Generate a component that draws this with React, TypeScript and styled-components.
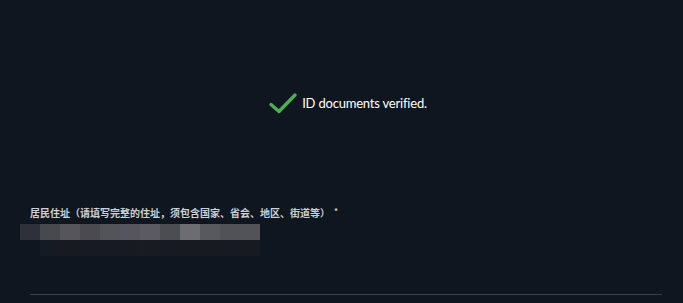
import React from "react";
import styled, { createGlobalStyle } from "styled-components";

const Global = createGlobalStyle`
  html, body {
    margin: 0;
    padding: 0;
    background: #10161f;
  }
  body {
    font-family: Lato, "Noto Sans", sans-serif;
    width: 683px;
    height: 303px;
    overflow: hidden;
  }
`;

const Page = styled.div`
  width: 683px;
  height: 303px;
  box-sizing: border-box;
  background: #10161f;
  display: flex;
  flex-direction: column;
`;

const Status = styled.div`
  margin-top: 92px;
  height: 22px;
  display: flex;
  align-items: center;
  justify-content: center;
  gap: 4px;
  padding-left: 12px;
`;

const StatusText = styled.span`
  font-family: Lato, sans-serif;
  font-size: 13px;
  color: #ffffff;
  letter-spacing: -0.2px;
`;

const Field = styled.div`
  margin-top: 92px;
  padding-left: 20px;
  display: flex;
  flex-direction: column;
`;

const Label = styled.label`
  padding-left: 10px;
  font-family: "Noto Sans CJK SC", sans-serif;
  font-size: 10px;
  font-weight: 700;
  line-height: 14px;
  color: #cdcfd2;
  display: flex;
  align-items: flex-start;
`;

const Star = styled.span`
  margin-left: 4px;
  font-size: 8px;
  line-height: 10px;
  color: #cdcfd2;
`;

const Mosaic = styled.div`
  margin-top: 4px;
  display: flex;
  flex-direction: column;
`;

const MosaicRow = styled.div<{ $indent: number }>`
  display: flex;
  padding-left: ${(p) => p.$indent}px;
`;

const Cell = styled.div<{ $c: string; $h: number }>`
  width: 20px;
  height: ${(p) => p.$h}px;
  background: ${(p) => p.$c};
`;

const Divider = styled.div`
  margin: auto 21px 8px 30px;
  height: 1px;
  background: #3b4048;
`;

const topRow = [
  "#2f3139",
  "#48484f",
  "#56555c",
  "#4b4a51",
  "#52545a",
  "#56555d",
  "#5b5961",
  "#4c4c53",
  "#6c6c72",
  "#57595f",
  "#515158",
  "#525259",
];

const bottomRow = [
  "#161a22",
  "#181a22",
  "#181a23",
  "#171a22",
  "#181a22",
  "#191b23",
  "#171a22",
  "#181a22",
  "#181a22",
  "#171a22",
  "#171a21",
];

export default function App() {
  return (
    <>
      <Global />
      <Page>
        <Status>
          <svg width="30" height="22" viewBox="0 0 30 22">
            <polyline
              points="3,12.5 11,19.5 27,3"
              fill="none"
              stroke="#4caf50"
              strokeWidth="3.4"
              strokeLinecap="round"
              strokeLinejoin="round"
            />
          </svg>
          <StatusText>ID documents verified.</StatusText>
        </Status>
        <Field>
          <Label>
            居民住址（请填写完整的住址，须包含国家、省会、地区、街道等）
            <Star>*</Star>
          </Label>
          <Mosaic>
            <MosaicRow $indent={0}>
              {topRow.map((c, i) => (
                <Cell key={i} $c={c} $h={16} />
              ))}
            </MosaicRow>
            <MosaicRow $indent={20}>
              {bottomRow.map((c, i) => (
                <Cell key={i} $c={c} $h={16} />
              ))}
            </MosaicRow>
          </Mosaic>
        </Field>
        <Divider />
      </Page>
    </>
  );
}
